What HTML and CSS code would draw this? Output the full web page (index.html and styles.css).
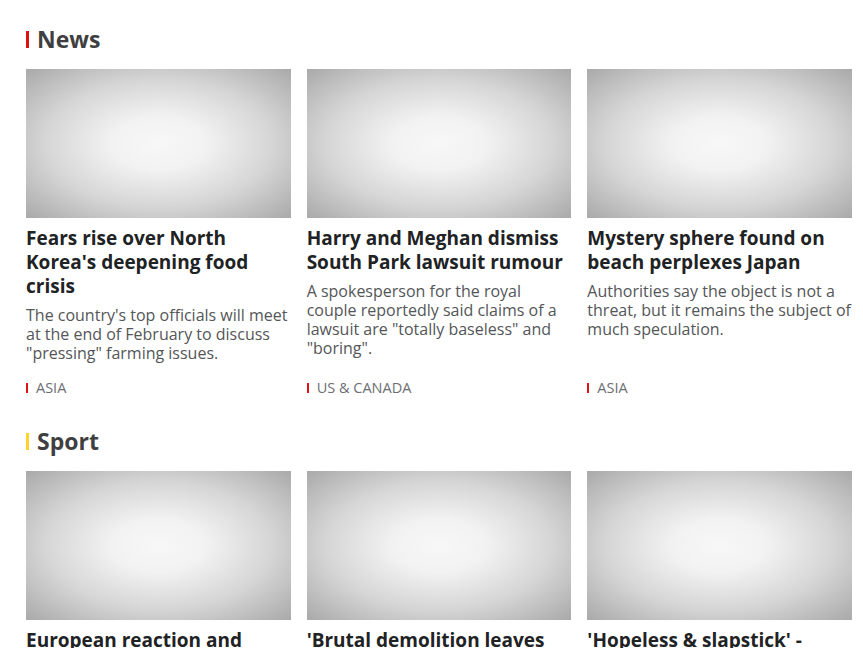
FILE: index.html
```html
<!DOCTYPE html>
<html>
<head>
<meta charset="utf-8">
<link rel="stylesheet" href="styles.css">
</head>
<body>
<div class="page">
  <section class="section news">
    <h2 class="section-title"><span class="section-bar"></span>News</h2>
    <div class="grid">
      <article class="card">
        <div class="thumb"></div>
        <h3 class="card-title">Fears rise over North Korea's deepening food crisis</h3>
        <p class="card-summary">The country's top officials will meet at the end of February to discuss "pressing" farming issues.</p>
        <div class="card-tag"><span class="tag-bar"></span>ASIA</div>
      </article>
      <article class="card">
        <div class="thumb"></div>
        <h3 class="card-title">Harry and Meghan dismiss South Park lawsuit rumour</h3>
        <p class="card-summary">A spokesperson for the royal couple reportedly said claims of a lawsuit are "totally baseless" and "boring".</p>
        <div class="card-tag"><span class="tag-bar"></span>US &amp; CANADA</div>
      </article>
      <article class="card">
        <div class="thumb"></div>
        <h3 class="card-title">Mystery sphere found on beach perplexes Japan</h3>
        <p class="card-summary">Authorities say the object is not a threat, but it remains the subject of much speculation.</p>
        <div class="card-tag"><span class="tag-bar"></span>ASIA</div>
      </article>
    </div>
  </section>
  <section class="section sport">
    <h2 class="section-title"><span class="section-bar"></span>Sport</h2>
    <div class="grid">
      <article class="card">
        <div class="thumb"></div>
        <h3 class="card-title">European reaction and</h3>
      </article>
      <article class="card">
        <div class="thumb"></div>
        <h3 class="card-title">'Brutal demolition leaves</h3>
      </article>
      <article class="card">
        <div class="thumb"></div>
        <h3 class="card-title">'Hopeless &amp; slapstick' -</h3>
      </article>
    </div>
  </section>
</div>
</body>
</html>
```
FILE: styles.css
```css
html, body {
  margin: 0;
  padding: 0;
  background: #ffffff;
}
body {
  font-family: "Open Sans", "Noto Sans", sans-serif;
  color: #202224;
}
.page {
  padding: 24px 11px 0 26px;
}
.section {
  margin-bottom: 30px;
}
.section-title {
  display: flex;
  align-items: center;
  margin: 0 0 15px 0;
  font-size: 23px;
  line-height: 30px;
  font-weight: 700;
  color: #3f3f42;
}
.section-bar {
  width: 3px;
  height: 17px;
  margin-right: 8px;
  background: #e0120e;
}
.sport .section-bar {
  background: #ffd230;
}
.grid {
  display: grid;
  grid-template-columns: repeat(3, 1fr);
  gap: 16px;
}
.card {
  display: flex;
  flex-direction: column;
}
.thumb {
  height: 149px;
  background: radial-gradient(ellipse at center, #f7f7f7 0%, #f2f2f2 25%, #d6d6d6 60%, #a9a9a9 100%);
}
.card-title {
  margin: 8px 0 0 0;
  font-size: 19px;
  line-height: 24px;
  font-weight: 700;
  color: #202224;
}
.card-summary {
  margin: 8px 0 0 0;
  font-size: 16px;
  line-height: 19px;
  color: #545658;
}
.card-tag {
  margin-top: auto;
  padding-top: 17px;
  display: flex;
  align-items: center;
  font-size: 14.5px;
  line-height: 16px;
  color: #6e6e73;
}
.tag-bar {
  width: 2px;
  height: 10px;
  margin-right: 8px;
  background: #e0120e;
}
```
